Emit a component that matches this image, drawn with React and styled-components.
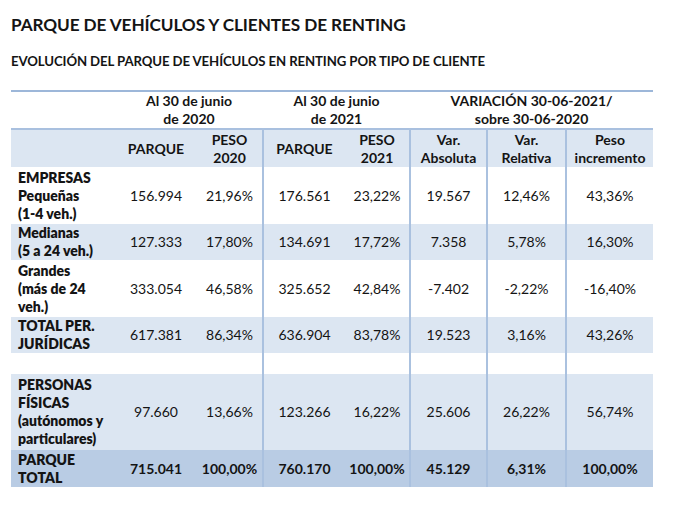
import React from "react"
import styled, { createGlobalStyle } from "styled-components"

const GlobalStyle = createGlobalStyle`
  body {
    margin: 0;
    background: #ffffff;
    font-family: Lato, "Open Sans", sans-serif;
    color: #141414;
  }
`

const Page = styled.div`
  padding: 14px 0 0 11px;
  width: 685px;
`

const Title = styled.h1`
  margin: 0;
  font-size: 17.2px;
  line-height: 21px;
  font-weight: 700;
  letter-spacing: -0.1px;
  color: #141414;
`

const Subtitle = styled.h2`
  margin: 18px 0 0;
  font-size: 13.2px;
  line-height: 16px;
  font-weight: 700;
  letter-spacing: -0.1px;
  color: #141414;
`

const Table = styled.table`
  margin-top: 21px;
  width: 642px;
  border-collapse: collapse;
  table-layout: fixed;
  font-size: 14px;
  line-height: 18px;
  border-top: 2px solid #9db7d9;
`

const Row = styled.tr`
  height: ${(p) => p.$h}px;
  background: ${(p) =>
    p.$tone === "blue" ? "#dce6f2" : p.$tone === "dark" ? "#b9cce4" : "#ffffff"};
  font-weight: ${(p) => (p.$bold ? 700 : 400)};
  border-top: ${(p) => (p.$line ? "2px solid #a9c0df" : "none")};
`

const Cell = styled.td`
  padding: 0 2px;
  text-align: center;
  vertical-align: middle;
  border-left: ${(p) => (p.$sep ? "2px solid #aac1df" : "none")};
`

const Label = styled.td`
  padding: 0 0 0 7px;
  text-align: left;
  vertical-align: middle;
  font-weight: 800;
`

const HeadCell = styled.th`
  padding: 0 2px;
  text-align: center;
  vertical-align: middle;
  font-weight: 700;
  border-left: ${(p) => (p.$sep ? "2px solid #aac1df" : "none")};
`

const widths = [104, 82, 66, 82, 65, 77, 79, 87]
const seps = [false, false, false, true, false, true, true, true]

const rows = [
  { label: ["EMPRESAS", "Pequeñas", "(1-4 veh.)"], h: 57, tone: "white", values: ["156.994", "21,96%", "176.561", "23,22%", "19.567", "12,46%", "43,36%"] },
  { label: ["Medianas", "(5 a 24 veh.)"], h: 35, tone: "blue", values: ["127.333", "17,80%", "134.691", "17,72%", "7.358", "5,78%", "16,30%"] },
  { label: ["Grandes", "(más de 24", "veh.)"], h: 57, tone: "white", values: ["333.054", "46,58%", "325.652", "42,84%", "-7.402", "-2,22%", "-16,40%"] },
  { label: ["TOTAL PER.", "JURÍDICAS"], h: 35, tone: "blue", values: ["617.381", "86,34%", "636.904", "83,78%", "19.523", "3,16%", "43,26%"] },
  { label: [], h: 21, tone: "white", values: ["", "", "", "", "", "", ""] },
  { label: ["PERSONAS", "FÍSICAS", "(autónomos y", "particulares)"], h: 76, tone: "blue", values: ["97.660", "13,66%", "123.266", "16,22%", "25.606", "26,22%", "56,74%"] },
  { label: ["PARQUE", "TOTAL"], h: 37, tone: "dark", bold: true, values: ["715.041", "100,00%", "760.170", "100,00%", "45.129", "6,31%", "100,00%"] },
]

function Lines({ items }) {
  return items.map((t, i) => (
    <React.Fragment key={i}>
      {i > 0 && <br />}
      {t}
    </React.Fragment>
  ))
}

export default function App() {
  return (
    <Page>
      <GlobalStyle />
      <Title>PARQUE DE VEHÍCULOS Y CLIENTES DE RENTING</Title>
      <Subtitle>EVOLUCIÓN DEL PARQUE DE VEHÍCULOS EN RENTING POR TIPO DE CLIENTE</Subtitle>
      <Table>
        <colgroup>
          {widths.map((w, i) => (
            <col key={i} style={{ width: w }} />
          ))}
        </colgroup>
        <thead>
          <Row $h={38} $tone="white">
            <HeadCell />
            <HeadCell colSpan={2}>
              <Lines items={["Al 30 de junio", "de 2020"]} />
            </HeadCell>
            <HeadCell colSpan={2}>
              <Lines items={["Al 30 de junio", "de 2021"]} />
            </HeadCell>
            <HeadCell colSpan={3}>
              <Lines items={["VARIACIÓN 30-06-2021/", "sobre 30-06-2020"]} />
            </HeadCell>
          </Row>
          <Row $h={38} $tone="blue" $line>
            <HeadCell />
            <HeadCell>PARQUE</HeadCell>
            <HeadCell>
              <Lines items={["PESO", "2020"]} />
            </HeadCell>
            <HeadCell $sep>PARQUE</HeadCell>
            <HeadCell>
              <Lines items={["PESO", "2021"]} />
            </HeadCell>
            <HeadCell $sep>
              <Lines items={["Var.", "Absoluta"]} />
            </HeadCell>
            <HeadCell $sep>
              <Lines items={["Var.", "Relativa"]} />
            </HeadCell>
            <HeadCell $sep>
              <Lines items={["Peso", "incremento"]} />
            </HeadCell>
          </Row>
        </thead>
        <tbody>
          {rows.map((r, i) => (
            <Row key={i} $h={r.h} $tone={r.tone} $bold={r.bold}>
              <Label>
                <Lines items={r.label} />
              </Label>
              {r.values.map((v, j) => (
                <Cell key={j} $sep={seps[j + 1]}>
                  {v}
                </Cell>
              ))}
            </Row>
          ))}
        </tbody>
      </Table>
    </Page>
  )
}
